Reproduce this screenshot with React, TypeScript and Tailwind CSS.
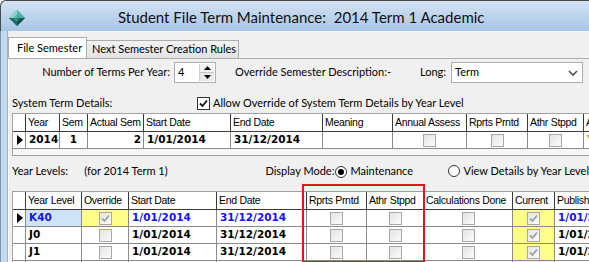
import React from 'react';

const ui = "font-['Lato',sans-serif] text-[11px] text-black";
const cellFont = "font-['Liberation_Sans',sans-serif] text-[10.5px] tracking-[-0.3px]";
const boldFont = "font-['DejaVu_Sans',sans-serif] text-[10.5px] font-bold";

function Check({ checked = false, dim = true }: { checked?: boolean; dim?: boolean }) {
  return (
    <span
      className={
        'inline-flex w-[13px] h-[13px] items-center justify-center border ' +
        (dim ? 'border-[#a8a8a8] bg-gradient-to-br from-[#e4e4e4] to-[#fbfbfb]' : 'border-[#333] bg-white')
      }
    >
      {checked && (
        <svg width="11" height="11" viewBox="0 0 11 11">
          <path
            d="M2 5.5 L4.5 8 L9 2.5"
            fill="none"
            stroke={dim ? '#a0a0a0' : '#111'}
            strokeWidth="1.8"
          />
        </svg>
      )}
    </span>
  );
}

function Arrow() {
  return (
    <svg width="8" height="10" viewBox="0 0 8 10">
      <polygon points="1,0 7,5 1,10" fill="#000" />
    </svg>
  );
}

function Radio({ on }: { on?: boolean }) {
  return (
    <span className="inline-flex w-[12px] h-[12px] shrink-0 rounded-full border border-[#333] bg-white items-center justify-center">
      {on && <span className="w-[6px] h-[6px] rounded-full bg-black" />}
    </span>
  );
}

function AppIcon() {
  return (
    <svg width="16" height="16" viewBox="0 0 16 16">
      <polygon points="8,0 16,8 8,16 0,8" fill="#2f8f88" />
      <polygon points="8,0 8,8 0,8" fill="#8fd6cf" />
      <polygon points="8,0 16,8 8,8" fill="#4fb3aa" />
      <polygon points="0,8 8,8 8,16" fill="#1f6d66" />
      <polygon points="8,8 16,8 8,16" fill="#154e4a" />
      <polygon points="4,8 8,4 12,8 8,12" fill="#3aa39a" opacity="0.6" />
    </svg>
  );
}

const g1 = 'grid grid-cols-[13px_34px_28px_56px_87px_92px_70px_74px_61px_56px_80px]';
const g2 = 'grid grid-cols-[13px_56px_47px_88px_90px_60px_57px_89px_42px_80px]';

function HeadCell({ children }: { children?: React.ReactNode }) {
  return (
    <div className={'h-[18px] border-r border-b border-[#3c3c3c] bg-white pl-[2px] flex items-center whitespace-nowrap overflow-hidden ' + cellFont}>
      {children}
    </div>
  );
}

function Cell({
  children,
  className = '',
}: {
  children?: React.ReactNode;
  className?: string;
}) {
  return (
    <div className={'h-[17px] border-r border-b border-[#8a8a8a] flex items-center whitespace-nowrap overflow-hidden ' + className}>
      {children}
    </div>
  );
}

type LevelRow = { level: string; sel?: boolean; override?: boolean };

const levels: LevelRow[] = [
  { level: 'K40', sel: true, override: true },
  { level: 'J0' },
  { level: 'J1' },
  { level: 'J2' },
];

export default function App() {
  return (
    <div className="w-[589px] h-[262px] overflow-hidden bg-[#f0f0f0] flex flex-col">
      {/* title bar */}
      <div className="h-[31px] shrink-0 border-t border-l border-[#4a4a4a] rounded-tl-[6px] bg-gradient-to-b from-[#d3e3f4] to-[#a8c5e6] flex items-center">
        <div className="ml-[8px] mt-[3px]">
          <AppIcon />
        </div>
        <div className="ml-[93px] mt-[3px] font-['Lato',sans-serif] text-[15px] text-[#111] whitespace-pre">
          Student File Term Maintenance:  2014 Term 1 Academic
        </div>
      </div>

      <div className="flex flex-1 min-h-0">
        {/* left frame */}
        <div className="w-[8px] shrink-0 bg-[#c4d9ef] border-l border-[#7d93ab] border-r border-r-[#9fb3c8]" />

        {/* client */}
        <div className="flex-1 min-w-0 flex flex-col">
          {/* tabs */}
          <div className="h-[24px] mt-[3px] flex items-end shrink-0">
            <div className={'w-[79px] h-[22px] bg-white border border-b-0 border-[#adadad] flex items-center pl-[8px] whitespace-nowrap relative top-[1px] ' + ui}>
              File Semester
            </div>
            <div className={'w-[152px] h-[18px] border border-b-0 border-l-0 border-[#acacac] bg-gradient-to-b from-[#f2f2f2] to-[#e3e3e3] flex items-center pl-[5px] whitespace-nowrap ' + ui}>
              Next Semester Creation Rules
            </div>
          </div>

          {/* tab page */}
          <div className="flex-1 border-t border-l border-t-[#adadad] border-l-white pl-[3px] flex flex-col min-h-0 relative">
            {/* row 1 */}
            <div className={'mt-[3px] h-[21px] flex items-center shrink-0 ' + ui}>
              <div className="w-[158px] text-right whitespace-nowrap">Number of Terms Per Year:</div>
              <div className="ml-[4px] w-[42px] h-[21px] bg-white border border-[#abadb3] flex">
                <div className="flex-1 pl-[3px] flex items-center">4</div>
                <div className="w-[15px] flex flex-col border-l border-[#d0d0d0] my-[1px] mr-[1px]">
                  <div className="flex-1 bg-[#f2f2f2] border-b border-[#c8c8c8] flex items-center justify-center">
                    <svg width="7" height="4" viewBox="0 0 7 4"><polygon points="0,4 3.5,0 7,4" fill="#000" /></svg>
                  </div>
                  <div className="flex-1 bg-[#e8e8e8] flex items-center justify-center">
                    <svg width="7" height="4" viewBox="0 0 7 4"><polygon points="0,0 3.5,4 7,0" fill="#000" /></svg>
                  </div>
                </div>
              </div>
              <div className="ml-[19px] w-[185px] whitespace-nowrap">Override Semester Description:-</div>
              <div className="w-[31px] whitespace-nowrap">Long:</div>
              <div className="w-[132px] h-[21px] bg-white border border-[#abadb3] flex items-center pl-[3px]">
                <span className="flex-1">Term</span>
                <svg width="10" height="8" viewBox="0 0 10 8" className="mr-[4px]">
                  <path d="M1 2 L5 6 L9 2" fill="none" stroke="#555" strokeWidth="1.6" />
                </svg>
              </div>
            </div>

            {/* row 2 */}
            <div className={'mt-[12px] h-[16px] flex items-center shrink-0 ' + ui}>
              <div className="w-[185px] whitespace-nowrap">System Term Details:</div>
              <Check checked dim={false} />
              <div className="ml-[3px] whitespace-nowrap">Allow Override of System Term Details by Year Level</div>
            </div>

            {/* grid 1 */}
            <div className="mt-[2px] h-[43px] shrink-0 border border-r-0 border-[#a0a0a0] bg-[#f7f7f7] overflow-hidden w-[700px]">
              <div className={g1}>
                <HeadCell />
                <HeadCell>Year</HeadCell>
                <HeadCell>Sem</HeadCell>
                <HeadCell>Actual Sem</HeadCell>
                <HeadCell>Start Date</HeadCell>
                <HeadCell>End Date</HeadCell>
                <HeadCell>Meaning</HeadCell>
                <HeadCell>Annual Assess</HeadCell>
                <HeadCell>Rprts Prntd</HeadCell>
                <HeadCell>Athr Stppd</HeadCell>
                <HeadCell>Auth Level</HeadCell>
              </div>
              <div className={g1 + ' bg-white'}>
                <Cell className="justify-center pl-[1px]"><Arrow /></Cell>
                <Cell className={'pl-[3px] ' + boldFont}>2014</Cell>
                <Cell className={'justify-center ' + boldFont}>1</Cell>
                <Cell className={'justify-end pr-[2px] ' + boldFont}>2</Cell>
                <Cell className={'pl-[3px] ' + boldFont}>1/01/2014</Cell>
                <Cell className={'pl-[3px] ' + boldFont}>31/12/2014</Cell>
                <Cell />
                <Cell className="justify-center"><Check /></Cell>
                <Cell className="justify-center"><Check /></Cell>
                <Cell className="justify-center"><Check /></Cell>
                <Cell className={'pl-[3px] text-[#b89c00] ' + boldFont}>Y</Cell>
              </div>
            </div>

            {/* row 3 */}
            <div className={'mt-[7px] h-[16px] flex items-center shrink-0 ' + ui}>
              <div className="w-[73px] whitespace-nowrap">Year Levels:</div>
              <div className="w-[183px] whitespace-nowrap">(for 2014 Term 1)</div>
              <div className="w-[69px] whitespace-nowrap">Display Mode:</div>
              <div className="ml-[1px]"><Radio on /></div>
              <div className="ml-[3px] w-[99px] whitespace-nowrap">Maintenance</div>
              <Radio />
              <div className="ml-[3px] whitespace-nowrap">View Details by Year Level</div>
            </div>

            {/* grid 2 */}
            <div className="mt-[12px] flex-1 min-h-0 border border-r-0 border-b-0 border-[#a0a0a0] bg-[#f7f7f7] overflow-hidden w-[700px]">
              <div className={g2}>
                <HeadCell />
                <HeadCell>Year Level</HeadCell>
                <HeadCell>Override</HeadCell>
                <HeadCell>Start Date</HeadCell>
                <HeadCell>End Date</HeadCell>
                <HeadCell>Rprts Prntd</HeadCell>
                <HeadCell>Athr Stppd</HeadCell>
                <HeadCell>Calculations Done</HeadCell>
                <HeadCell>Current</HeadCell>
                <HeadCell>Publish Date</HeadCell>
              </div>
              {levels.map((r) => {
                const txt = r.sel ? 'text-[#1414f0]' : 'text-black';
                return (
                  <div key={r.level} className={g2 + ' bg-white'}>
                    <Cell className="justify-center pl-[1px]">{r.sel && <Arrow />}</Cell>
                    <Cell className={'pl-[3px] ' + boldFont + ' ' + txt + (r.sel ? ' bg-[#cfe3f7]' : '')}>{r.level}</Cell>
                    <Cell className={'justify-center ' + (r.override ? 'bg-[#ffff88]' : '')}><Check checked={r.override} /></Cell>
                    <Cell className={'pl-[3px] ' + boldFont + ' ' + txt}>1/01/2014</Cell>
                    <Cell className={'pl-[3px] ' + boldFont + ' ' + txt}>31/12/2014</Cell>
                    <Cell className="justify-center"><Check /></Cell>
                    <Cell className="justify-center"><Check /></Cell>
                    <Cell className="justify-center"><Check /></Cell>
                    <Cell className="justify-center bg-[#ffff88]"><Check checked /></Cell>
                    <Cell className={'pl-[3px] ' + boldFont + ' ' + txt}>1/01/2014</Cell>
                  </div>
                );
              })}
            </div>

            {/* red highlight box */}
            <div className="absolute left-[293px] top-[125px] w-[123px] h-[79px] border-2 border-[#e0161b]" />
          </div>
        </div>
      </div>
    </div>
  );
}
